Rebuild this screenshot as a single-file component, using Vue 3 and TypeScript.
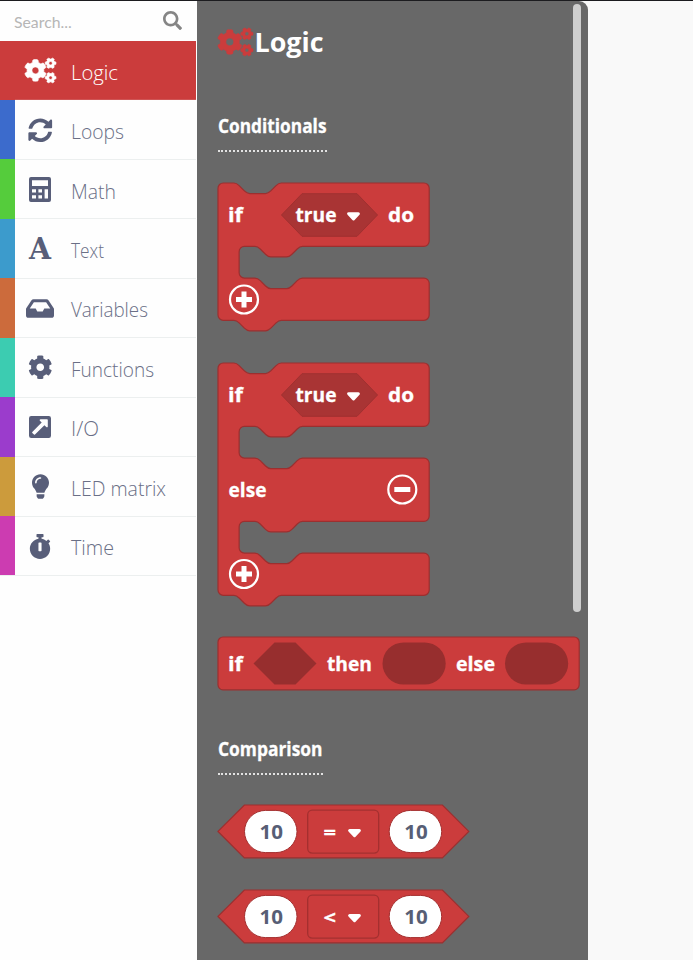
<script setup lang="ts">
interface Category {
  name: string
  color: string
  icon: string
  width: number
}

interface Label {
  text: string
  x: number
  y: number
  width: number
}

interface StackBlock {
  id: string
  className: string
  height: number
  path: string
  labels: Label[]
  plusY: number
  minusY?: number
}

const categories: Category[] = [
  { name: 'Logic', color: '#cb3c3c', icon: 'cogs', width: 47 },
  { name: 'Loops', color: '#3c6bcc', icon: 'sync', width: 53 },
  { name: 'Math', color: '#55cc3c', icon: 'calc', width: 45 },
  { name: 'Text', color: '#3c9bcc', icon: 'font', width: 33 },
  { name: 'Variables', color: '#cc6b3c', icon: 'inbox', width: 77 },
  { name: 'Functions', color: '#3cccb1', icon: 'cog', width: 83 },
  { name: 'I/O', color: '#9b3ccc', icon: 'io', width: 28 },
  { name: 'LED matrix', color: '#cc9b3c', icon: 'bulb', width: 95 },
  { name: 'Time', color: '#cc3cb1', icon: 'watch', width: 43 },
]

const smallGear =
  'M512.1 191l-8.2 14.3c-3 5.3-9.4 7.5-15.1 5.4-11.8-4.4-22.6-10.7-32.1-18.6-4.6-3.8-5.8-10.5-2.8-15.7l8.2-14.3c-6.9-8-12.3-17.3-15.9-27.4h-16.5c-6 0-11.2-4.3-12.2-10.3-2-12-2.1-24.6 0-37.1 1-6 6.2-10.4 12.2-10.4h16.5c3.6-10.1 9-19.4 15.9-27.4l-8.2-14.3c-3-5.2-1.9-11.9 2.8-15.7 9.5-7.9 20.4-14.2 32.1-18.6 5.7-2.1 12.1.1 15.1 5.4l8.2 14.3c10.5-1.9 21.2-1.9 31.7 0L552 6.3c3-5.3 9.4-7.5 15.1-5.4 11.8 4.4 22.6 10.7 32.1 18.6 4.6 3.8 5.8 10.5 2.8 15.7l-8.2 14.3c6.9 8 12.3 17.3 15.9 27.4h16.5c6 0 11.2 4.3 12.2 10.3 2 12 2.1 24.6 0 37.1-1 6-6.2 10.4-12.2 10.4h-16.5c-3.6 10.1-9 19.4-15.9 27.4l8.2 14.3c3 5.2 1.9 11.9-2.8 15.7-9.5 7.9-20.4 14.2-32.1 18.6-5.7 2.1-12.1-.1-15.1-5.4l-8.2-14.3c-10.4 1.9-21.2 1.9-31.7 0zm-10.5-58.8c38.5 29.6 82.4-14.3 52.8-52.8-38.5-29.7-82.4 14.3-52.8 52.8z'
const bigGear =
  'M386.3 286.1l33.7 16.8c10.1 5.8 14.5 18.1 10.5 29.1-8.9 24.2-26.4 46.4-42.6 65.8-7.4 8.9-20.2 11.1-30.3 5.3l-29.1-16.8c-16 13.7-34.6 24.6-54.9 31.7v33.6c0 11.6-8.3 21.6-19.7 23.6-24.6 4.2-50.4 4.4-75.9 0-11.5-2-20-11.9-20-23.6V418c-20.3-7.2-38.9-18-54.9-31.7L74 403c-10 5.8-22.9 3.6-30.3-5.3-16.2-19.4-33.3-41.6-42.2-65.7-4-10.9.4-23.2 10.5-29.1l33.3-16.8c-3.9-20.9-3.9-42.4 0-63.4L12 205.8c-10.1-5.8-14.6-18.1-10.5-29 8.9-24.2 26-46.4 42.2-65.8 7.4-8.9 20.2-11.1 30.3-5.3l29.1 16.8c16-13.7 34.6-24.6 54.9-31.7V57.1c0-11.5 8.2-21.5 19.6-23.5 24.6-4.2 50.5-4.4 76-.1 11.5 2 20 11.9 20 23.6v33.6c20.3 7.2 38.9 18 54.9 31.7l29.1-16.8c10-5.8 22.9-3.6 30.3 5.3 16.2 19.4 33.2 41.6 42.1 65.8 4 10.9.1 23.2-10 29.1l-33.7 16.8c3.9 21 3.9 42.5 0 63.5zm-117.6 21.1c59.2-77-28.7-164.9-105.7-105.7-59.2 77 28.7 164.9 105.7 105.7z'

// Block outlines are written in grid units and scaled to pixels in the template.
const notchRight = 'c2,0 3,1 4,2 l4,4 c1,1 2,2 4,2 h12 c2,0 3,-1 4,-2 l4,-4 c1,-1 2,-2 4,-2'
const notchLeft = 'c-2,0 -3,1 -4,2 l-4,4 c-1,1 -2,2 -4,2 h-12 c-2,0 -3,-1 -4,-2 l-4,-4 c-1,-1 -2,-2 -4,-2'

function mouth(top: number, nextBottom: number): string {
  return `V${top - 4} a4,4 0 0 1 -4,4 H64 ${notchLeft} H20 a4,4 0 0 0 -4,4 v16 a4,4 0 0 0 4,4 h8 ${notchRight} H156 a4,4 0 0 1 4,4 ${
    nextBottom ? `V${nextBottom - 4} a4,4 0 0 1 -4,4 H48 ${notchLeft} H4 a4,4 0 0 1 -4,-4 z` : ''
  }`
}

const head = `M0,4 a4,4 0 0 1 4,-4 h8 ${notchRight} H156 a4,4 0 0 1 4,4 `

const stackBlocks: StackBlock[] = [
  {
    id: 'if',
    className: 'block-if',
    height: 150,
    path: head + mouth(48, 104),
    labels: [],
    plusY: 117,
  },
  {
    id: 'if-else',
    className: 'block-if-else',
    height: 245,
    path: head + mouth(48, 0) + mouth(120, 176),
    labels: [{ text: 'else', x: 10.5, y: 134, width: 38 }],
    plusY: 211.5,
    minusY: 127,
  },
]

const operators: string[] = ['=', '<']
</script>

<template>
  <div class="app">
    <aside class="sidebar">
      <div class="search">
        <span>Search...</span>
        <svg class="search-icon" viewBox="0 0 512 512">
          <path d="M505 442.7L405.3 343c-4.5-4.5-10.6-7-17-7H372c27.6-35.3 44-79.7 44-128C416 93.1 322.9 0 208 0S0 93.1 0 208s93.1 208 208 208c48.3 0 92.7-16.4 128-44v16.3c0 6.4 2.5 12.5 7 17l99.7 99.7c9.4 9.4 24.6 9.4 33.9 0l28.3-28.3c9.4-9.4 9.4-24.6.1-34zM208 344c-75 0-136-61-136-136 0-75 61-136 136-136 75 0 136 61 136 136 0 75-61 136-136 136z" />
        </svg>
      </div>
      <nav>
        <div
          v-for="(c, i) in categories"
          :key="c.name"
          class="row"
          :class="{ active: i === 0 }"
        >
          <span class="stripe" :style="{ background: c.color }"></span>
          <span class="icon">
            <svg v-if="c.icon === 'cogs'" class="cogs" width="31" height="25" viewBox="0 0 640 512">
              <path :d="bigGear" /><path :d="smallGear" /><path :d="smallGear" transform="translate(0 299)" />
            </svg>
            <svg v-else-if="c.icon === 'sync'" width="24.5" height="24.5" viewBox="0 0 512 512">
              <path d="M370.72 133.28C339.458 104.008 298.888 87.962 255.848 88c-77.458.068-144.328 53.178-162.791 126.85-1.344 5.363-6.122 9.15-11.651 9.15H24.103c-7.498 0-13.194-6.807-11.807-14.176C33.933 94.924 134.813 8 256 8c66.448 0 126.791 26.136 171.315 68.685L463.03 40.97C478.149 25.851 504 36.559 504 57.941V192c0 13.255-10.745 24-24 24H345.941c-21.382 0-32.09-25.851-16.971-40.971l41.75-41.749zM32 296h134.059c21.382 0 32.09 25.851 16.971 40.971l-41.75 41.75c31.262 29.273 71.835 45.319 114.876 45.28 77.418-.07 144.315-53.144 162.787-126.849 1.344-5.363 6.122-9.15 11.651-9.15h57.304c7.498 0 13.194 6.807 11.807 14.176C478.067 417.076 377.187 504 256 504c-66.448 0-126.791-26.136-171.315-68.685L48.97 471.03C33.851 486.149 8 475.441 8 454.059V320c0-13.255 10.745-24 24-24z" />
            </svg>
            <svg v-else-if="c.icon === 'calc'" width="22" height="25" viewBox="0 0 22 25">
              <path fill-rule="evenodd" d="M2 0H20a2 2 0 0 1 2 2V23a2 2 0 0 1-2 2H2a2 2 0 0 1-2-2V2a2 2 0 0 1 2-2zM3 3.3V9H19V3.3zM3 12.2v3.3H7v-3.3zM9.4 12.2v3.3h3.6v-3.3zM3 18.3v3.3H7v-3.3zM9.4 18.3v3.3h3.6v-3.3zM15.6 12.2v9.4H19v-9.4z" />
            </svg>
            <svg v-else-if="c.icon === 'font'" width="24" height="36" viewBox="0 0 24 36">
              <text class="letter" x="1" y="28" textLength="22" lengthAdjust="spacingAndGlyphs">A</text>
            </svg>
            <svg v-else-if="c.icon === 'inbox'" width="28" height="25" viewBox="0 0 576 512">
              <path d="M567.938 243.908L462.25 85.374A48.003 48.003 0 0 0 422.311 64H153.689a48 48 0 0 0-39.938 21.374L8.062 243.908A47.994 47.994 0 0 0 0 270.533V400c0 26.51 21.49 48 48 48h480c26.51 0 48-21.49 48-48V270.533a47.994 47.994 0 0 0-8.062-26.625zM162.252 128h251.497l85.333 128H376l-32 64H232l-32-64H76.918l85.334-128z" />
            </svg>
            <svg v-else-if="c.icon === 'cog'" width="24.5" height="24.5" viewBox="0 0 512 512">
              <path d="M487.4 315.7l-42.6-24.6c4.3-23.2 4.3-47 0-70.2l42.6-24.6c4.9-2.8 7.1-8.6 5.5-14-11.1-35.6-30-67.8-54.7-94.6-3.8-4.1-10-5.1-14.8-2.3L380.8 110c-17.9-15.4-38.5-27.3-60.8-35.1V25.8c0-5.6-3.9-10.5-9.4-11.7-36.7-8.2-74.3-7.8-109.2 0-5.5 1.2-9.4 6.1-9.4 11.7V75c-22.2 7.9-42.8 19.8-60.8 35.1L88.7 85.5c-4.9-2.8-11-1.9-14.8 2.3-24.7 26.7-43.6 58.9-54.7 94.6-1.7 5.4.6 11.2 5.5 14L67.3 221c-4.3 23.2-4.3 47 0 70.2l-42.6 24.6c-4.9 2.8-7.1 8.6-5.5 14 11.1 35.6 30 67.8 54.7 94.6 3.8 4.1 10 5.1 14.8 2.3l42.6-24.6c17.9 15.4 38.5 27.3 60.8 35.1v49.2c0 5.6 3.9 10.5 9.4 11.7 36.7 8.2 74.3 7.8 109.2 0 5.5-1.2 9.4-6.1 9.4-11.7v-49.2c22.2-7.9 42.8-19.8 60.8-35.1l42.6 24.6c4.9 2.8 11 1.9 14.8-2.3 24.7-26.7 43.6-58.9 54.7-94.6 1.5-5.5-.7-11.3-5.6-14.1zM256 336c-44.1 0-80-35.9-80-80s35.9-80 80-80 80 35.9 80 80-35.9 80-80 80z" />
            </svg>
            <svg v-else-if="c.icon === 'io'" width="22" height="22" viewBox="0 0 22 22">
              <path fill-rule="evenodd" d="M2.2 0H19.8A2.2 2.2 0 0 1 22 2.2V19.8A2.2 2.2 0 0 1 19.8 22H2.2A2.2 2.2 0 0 1 0 19.8V2.2A2.2 2.2 0 0 1 2.2 0zM11.6 3.2c-.9 0-1.2.9-.7 1.5L12.7 6.5 3.3 15.9a.8.8 0 0 0 0 1L5 18.6a.8.8 0 0 0 1 0L15.4 9.2 17.3 11c.6.6 1.5.2 1.5-.6V4a.8.8 0 0 0-.8-.8z" />
            </svg>
            <svg v-else-if="c.icon === 'bulb'" width="17" height="25" viewBox="0 0 352 512">
              <path d="M96.06 454.35c.01 6.29 1.87 12.45 5.36 17.69l17.09 25.69a31.99 31.99 0 0 0 26.64 14.28h61.71a31.99 31.99 0 0 0 26.64-14.28l17.09-25.69a31.989 31.989 0 0 0 5.36-17.69l.04-38.35H96.01l.05 38.35zM0 176c0 44.37 16.45 84.85 43.56 115.78 16.52 18.85 42.36 58.23 52.21 91.45.04.26.07.52.11.78h160.24c.04-.26.07-.51.11-.78 9.85-33.22 35.69-72.6 52.21-91.45C335.55 260.85 352 220.37 352 176 352 78.61 272.91-.3 175.45 0 73.44.31 0 82.97 0 176zm176-80c-44.11 0-80 35.89-80 80 0 8.84-7.16 16-16 16s-16-7.16-16-16c0-61.76 50.24-112 112-112 8.84 0 16 7.16 16 16s-7.16 16-16 16z" />
            </svg>
            <svg v-else width="22" height="25" viewBox="0 0 448 512">
              <path d="M432 304c0 114.9-93.1 208-208 208S16 418.9 16 304c0-104 76.3-190.2 176-205.5V64h-28c-6.6 0-12-5.4-12-12V12c0-6.6 5.4-12 12-12h120c6.6 0 12 5.4 12 12v40c0 6.6-5.4 12-12 12h-28v34.5c37.5 5.8 71.7 21.6 99.7 44.6l27.5-27.5c4.7-4.7 12.3-4.7 17 0l28.3 28.3c4.7 4.7 4.7 12.3 0 17l-29.4 29.4-.6.6C419.7 223.3 432 262.2 432 304zm-176 36V188.5c0-6.6-5.4-12-12-12h-40c-6.6 0-12 5.4-12 12V340c0 6.6 5.4 12 12 12h40c6.6 0 12-5.4 12-12z" />
            </svg>
          </span>
          <svg class="name" width="110" height="32">
            <text x="0" y="22" :textLength="c.width" lengthAdjust="spacingAndGlyphs">{{ c.name }}</text>
          </svg>
        </div>
      </nav>
    </aside>

    <main class="workspace">
      <section class="flyout">
        <h1 class="title">
          <svg class="title-icon" viewBox="0 0 640 512">
            <path :d="bigGear" /><path :d="smallGear" /><path :d="smallGear" transform="translate(0 299)" />
          </svg>
          <svg width="76" height="40">
            <text x="1.5" y="30" textLength="69" lengthAdjust="spacingAndGlyphs">Logic</text>
          </svg>
        </h1>

        <h2 class="heading conditionals">
          <svg width="109" height="28"><text x="0" y="20" textLength="108.5" lengthAdjust="spacingAndGlyphs">Conditionals</text></svg>
        </h2>

        <svg
          v-for="b in stackBlocks"
          :key="b.id"
          class="block"
          :class="b.className"
          width="214"
          :height="b.height"
        >
          <g transform="translate(1 1)">
            <path class="shape" :d="b.path" transform="scale(1.32)" />
            <text x="10" y="39" textLength="15" lengthAdjust="spacingAndGlyphs">if</text>
            <path class="field" d="M63.5 32 L84 10.7 H139 L159.5 32 L139 53.3 H84 z" />
            <text x="77.5" y="39" textLength="41" lengthAdjust="spacingAndGlyphs">true</text>
            <path class="arrow" d="M130.6 30.7 h9.8 l-4.9 5.2 z" />
            <text x="170" y="39" textLength="26" lengthAdjust="spacingAndGlyphs">do</text>
            <text
              v-for="l in b.labels"
              :key="l.text"
              :x="l.x"
              :y="l.y"
              :textLength="l.width"
              lengthAdjust="spacingAndGlyphs"
            >{{ l.text }}</text>
            <g :transform="`translate(26 ${b.plusY - 0.5})`">
              <circle class="ring" r="14" />
              <path class="sign" d="M-8 0 H8 M0 -8 V8" />
            </g>
            <g v-if="b.minusY" :transform="`translate(184.3 ${b.minusY - 0.5})`">
              <circle class="ring" r="14" />
              <path class="sign" d="M-8 0 H8" />
            </g>
          </g>
        </svg>

        <svg class="block block-ternary" width="364" height="55">
          <g transform="translate(1 1)">
            <rect class="shape" width="361.2" height="52.8" rx="5" />
            <text x="10" y="34" textLength="15" lengthAdjust="spacingAndGlyphs">if</text>
            <path class="slot" d="M35.5 26.5 L56.5 5.4 H77.5 L98.5 26.5 L77.5 47.6 H56.5 z" />
            <text x="109" y="34" textLength="45" lengthAdjust="spacingAndGlyphs">then</text>
            <rect class="slot" x="164.5" y="5.4" width="63.2" height="42.2" rx="21.1" />
            <text x="238" y="34" textLength="39" lengthAdjust="spacingAndGlyphs">else</text>
            <rect class="slot" x="287" y="5.4" width="63.2" height="42.2" rx="21.1" />
          </g>
        </svg>

        <h2 class="heading comparison">
          <svg width="105" height="28"><text x="0" y="19.5" textLength="104.5" lengthAdjust="spacingAndGlyphs">Comparison</text></svg>
        </h2>

        <svg v-for="op in operators" :key="op" class="block block-compare" width="254" height="55">
          <g transform="translate(1 1)">
            <path class="shape" d="M0 26.4 L26.4 0 H224.4 L250.8 26.4 L224.4 52.8 H26.4 z" />
            <rect class="pill" x="26.5" y="5.4" width="52.5" height="42.2" rx="21.1" />
            <text class="number" x="41.5" y="34" textLength="23.5" lengthAdjust="spacingAndGlyphs">10</text>
            <rect class="dropdown" x="89.7" y="5.1" width="71" height="43" rx="4.5" />
            <text class="operator" x="105.5" y="33.5" textLength="12.5" lengthAdjust="spacingAndGlyphs">{{ op }}</text>
            <path class="arrow" d="M131.6 25.5 h9.8 l-4.9 5.2 z" />
            <rect class="pill" x="171.2" y="5.4" width="52.5" height="42.2" rx="21.1" />
            <text class="number" x="186.3" y="34" textLength="23.5" lengthAdjust="spacingAndGlyphs">10</text>
          </g>
        </svg>
        <div class="scrollbar"></div>
      </section>
    </main>
  </div>
</template>

<style>
body {
  margin: 0;
  overflow: hidden;
}
</style>

<style scoped>
.app {
  box-sizing: border-box;
  display: flex;
  width: 693px;
  height: 960px;
  border-top: 1px solid #1c1c1f;
  background: #fff;
  overflow: hidden;
  font-family: 'Open Sans', 'Noto Sans', sans-serif;
}

svg {
  display: block;
  flex: none;
  overflow: visible;
}

.sidebar {
  width: 197px;
  flex: none;
  background: #fefefe;
}

.search {
  display: flex;
  align-items: center;
  justify-content: space-between;
  box-sizing: border-box;
  height: 40px;
  padding: 0 15px 0 14px;
  color: #b6b6b6;
  font: 15.8px Lato, sans-serif;
}

.search-icon {
  width: 19px;
  height: 19px;
  margin-top: -2px;
  fill: #858585;
}

.row {
  display: flex;
  align-items: center;
  box-sizing: border-box;
  width: 196px;
  height: 59.44px;
  border-bottom: 1.5px solid #ecefef;
  color: #585e79;
  fill: #585e79;
}

.row.active {
  background: #cb3c3c;
  border-bottom-color: #cf5555;
  fill: #fff;
}

.stripe {
  width: 15px;
  height: 59.44px;
  flex: none;
}

.icon {
  display: flex;
  align-items: center;
  justify-content: center;
  width: 50px;
  height: 54px;
  align-self: flex-start;
  margin-top: 2.5px;
}

.cogs {
  stroke: #fff;
  stroke-width: 14px;
}

.letter {
  font: bold 29px 'DejaVu Serif', serif;
}

.name {
  margin: 7px 0 0 5.5px;
  fill: #6a6f86;
  font-size: 20px;
  font-weight: 300;
}

.active .name {
  fill: #fff;
}

.workspace {
  flex: 1;
  background: #f9f9f9;
}

.flyout {
  position: relative;
  box-sizing: border-box;
  width: 391px;
  height: 959px;
  padding-left: 21px;
  border-top-right-radius: 9px;
  background: #686868;
  overflow: hidden;
}

.title {
  display: flex;
  align-items: center;
  height: 40px;
  margin: 0;
  padding-top: 21px;
  fill: #fff;
  font-size: 26px;
  font-weight: 700;
}

.title-icon {
  width: 35px;
  height: 28px;
  fill: #cb3c3c;
  stroke: #cb3c3c;
  stroke-width: 12px;
}

.heading {
  width: max-content;
  margin: 0;
  padding-bottom: 9px;
  border-bottom: 2px dotted #e2e2e2;
  fill: #fff;
  font-size: 19px;
  font-weight: 700;
}

.heading text {
  stroke: #fff;
  stroke-width: 0.3px;
}

.conditionals {
  margin-top: 51px;
}

.comparison {
  margin-top: 45px;
}

.block {
  margin-left: -1px;
  fill: #fff;
  font-size: 20px;
  font-weight: 700;
}

.block text:not(.number) {
  stroke: #fff;
  stroke-width: 0.3px;
}

.block-if {
  margin-top: 30px;
}

.block-if-else {
  margin-top: 29.5px;
}

.block-ternary {
  margin-top: 29px;
}

.block-compare {
  margin-top: 29.5px;
}

.shape {
  fill: #cb3c3c;
  stroke: #9c2f2f;
  stroke-width: 1.2px;
  vector-effect: non-scaling-stroke;
}

.field {
  fill: #a93434;
  stroke: #a03030;
}

.slot {
  fill: #972e2e;
}

.dropdown {
  fill: none;
  stroke: #a43030;
  stroke-width: 1.3px;
}

.pill {
  fill: #fff;
  stroke: #a43030;
}

.number {
  fill: #575e75;
}

.operator {
  font-size: 18px;
}

.arrow {
  fill: #fff;
  stroke: #fff;
  stroke-width: 3px;
  stroke-linejoin: round;
}

.ring {
  fill: none;
  stroke: #fff;
  stroke-width: 2.2px;
}

.sign {
  stroke: #fff;
  stroke-width: 5px;
}

.scrollbar {
  position: absolute;
  top: 3px;
  right: 7px;
  width: 8px;
  height: 608px;
  border-radius: 4px;
  background: #cecece;
}
</style>
